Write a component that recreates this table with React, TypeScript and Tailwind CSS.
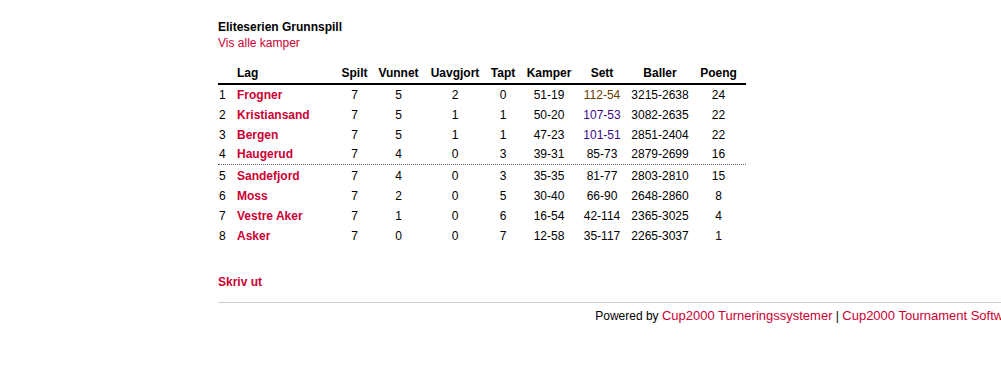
const rows = [
  { n: 1, lag: "Frogner", s: 7, v: 5, u: 2, t: 0, k: "51-19", sett: "112-54", settC: "text-[#6b3a00]", b: "3215-2638", p: 24 },
  { n: 2, lag: "Kristiansand", s: 7, v: 5, u: 1, t: 1, k: "50-20", sett: "107-53", settC: "text-[#3a0a8a]", b: "3082-2635", p: 22 },
  { n: 3, lag: "Bergen", s: 7, v: 5, u: 1, t: 1, k: "47-23", sett: "101-51", settC: "text-[#3a0a8a]", b: "2851-2404", p: 22 },
  { n: 4, lag: "Haugerud", s: 7, v: 4, u: 0, t: 3, k: "39-31", sett: "85-73", settC: "", b: "2879-2699", p: 16, cut: true },
  { n: 5, lag: "Sandefjord", s: 7, v: 4, u: 0, t: 3, k: "35-35", sett: "81-77", settC: "", b: "2803-2810", p: 15, after: true },
  { n: 6, lag: "Moss", s: 7, v: 2, u: 0, t: 5, k: "30-40", sett: "66-90", settC: "", b: "2648-2860", p: 8 },
  { n: 7, lag: "Vestre Aker", s: 7, v: 1, u: 0, t: 6, k: "16-54", sett: "42-114", settC: "", b: "2365-3025", p: 4 },
  { n: 8, lag: "Asker", s: 7, v: 0, u: 0, t: 7, k: "12-58", sett: "35-117", settC: "", b: "2265-3037", p: 1 },
];

const cols = "grid grid-cols-[19px_102px_31px_57px_56px_40px_52px_54px_62px_55px]";

export default function App() {
  return (
    <div className="w-full overflow-hidden bg-white">
      <div
        className="ml-[218px] w-[804px] pt-[19px] text-[12px] leading-4 text-black"
        style={{ fontFamily: '"Liberation Sans", Arial, sans-serif' }}
      >
        <div className="font-bold">Eliteserien Grunnspill</div>
        <div className="text-[#cc0033]">Vis alle kamper</div>

        {/* Tabell */}
        <div className="mt-3 w-[528px]">
          <div className={`${cols} h-[22px] items-start border-b-2 border-black font-bold leading-5`}>
            <div />
            <div>Lag</div>
            <div className="text-center">Spilt</div>
            <div className="text-center">Vunnet</div>
            <div className="text-center">Uavgjort</div>
            <div className="text-center">Tapt</div>
            <div className="text-center">Kamper</div>
            <div className="text-center">Sett</div>
            <div className="text-center">Baller</div>
            <div className="text-center">Poeng</div>
          </div>
          {rows.map((r) => (
            <div
              key={r.n}
              className={`${cols} ${
                r.cut
                  ? "h-5 border-b border-dotted border-[#666] leading-[19px]"
                  : r.after
                    ? "h-[21px] pt-px leading-5"
                    : "h-5 leading-5"
              }`}
            >
              <div className="pl-px">{r.n}</div>
              <div className="font-bold text-[#cc0033]">{r.lag}</div>
              <div className="text-center">{r.s}</div>
              <div className="text-center">{r.v}</div>
              <div className="text-center">{r.u}</div>
              <div className="text-center">{r.t}</div>
              <div className="text-center">{r.k}</div>
              <div className={`text-center ${r.settC}`}>{r.sett}</div>
              <div className="text-center">{r.b}</div>
              <div className="text-center">{r.p}</div>
            </div>
          ))}
        </div>

        <div className="mt-[28px] font-bold text-[#cc0033]">Skriv ut</div>
        <div className="mt-3 border-t border-[#cccccc]" />
        <div className="mt-[5px] whitespace-nowrap text-right">
          Powered by <span className="text-[13px] text-[#cc0033]">Cup2000 Turneringssystemer</span> |{" "}
          <span className="text-[13px] text-[#cc0033]">Cup2000 Tournament Software</span>
        </div>
      </div>
    </div>
  );
}
